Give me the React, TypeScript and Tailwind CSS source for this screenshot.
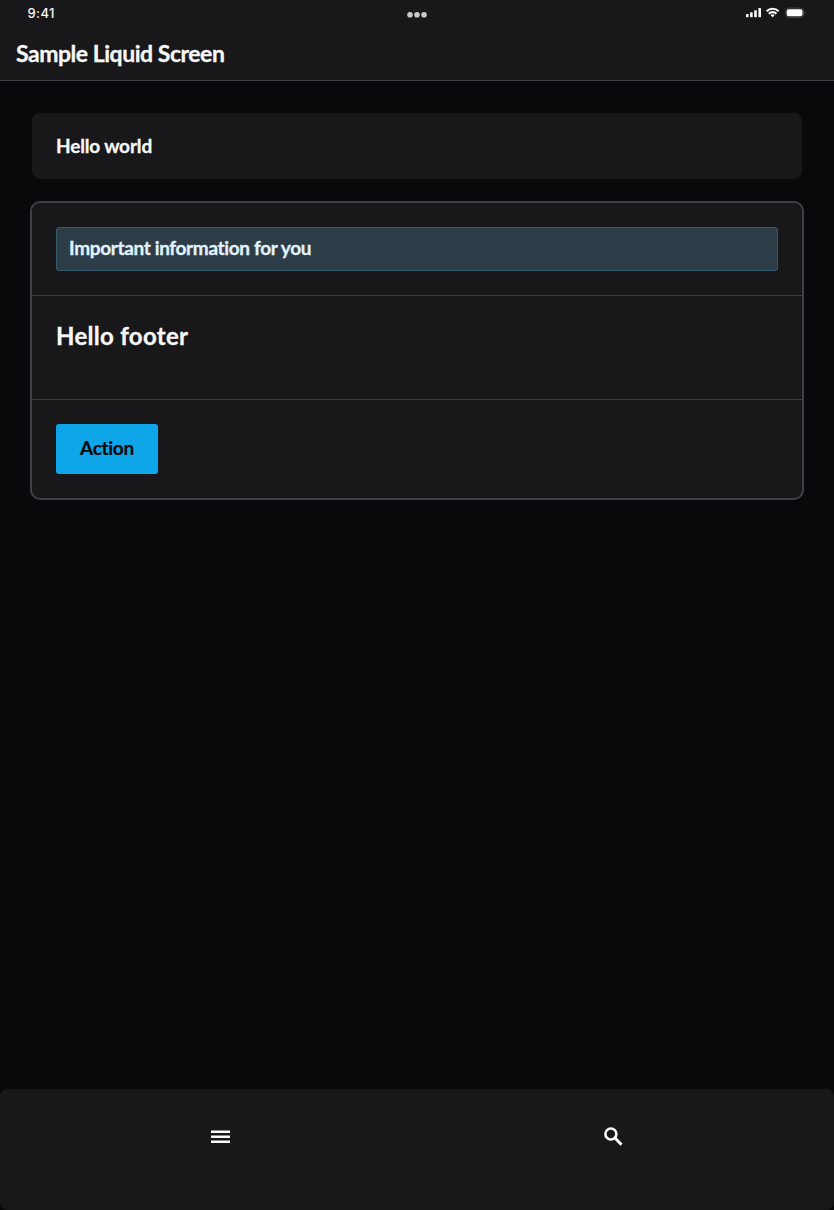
function StatusBar() {
  return (
    <div className="grid h-7 grid-cols-3 items-start">
      <span className="pt-[5px] pl-[27.5px] font-['Inter',sans-serif] text-[13px] leading-4 font-medium tracking-[0.4px]">9:41</span>
      <svg className="mt-[11px] justify-self-center" width="20" height="7" viewBox="0 0 20 7" fill="#c9c9ca">
        <circle cx="3" cy="3.8" r="2.8" />
        <circle cx="10" cy="3.8" r="2.8" />
        <circle cx="17" cy="3.8" r="2.8" />
      </svg>
      <svg className="mt-1.5 mr-[28px] justify-self-end" width="60" height="14" viewBox="0 0 60 14" fill="#fafafa">
        <rect x="0" y="8" width="2.6" height="3.2" rx=".6" />
        <rect x="4.1" y="6.3" width="2.6" height="4.9" rx=".6" />
        <rect x="8.2" y="4.2" width="2.6" height="7" rx=".6" />
        <rect x="12.4" y="2" width="2.6" height="9.2" rx=".6" />
        <g fill="none" stroke="#fafafa" strokeWidth="2.1">
          <path d="M20.6 5.3a8.4 8.4 0 0 1 12 0" />
          <path d="M22.8 7.7a5.3 5.3 0 0 1 7.6 0" />
        </g>
        <path d="M24.6 9.2a2.9 2.9 0 0 1 4 0l-2 2.1z" />
        <rect x="39.6" y="2.1" width="18" height="9.3" rx="3" fill="none" stroke="#48484b" strokeWidth="1" />
        <rect x="40.7" y="3.2" width="15.8" height="7.1" rx="2" fill="#fff" />
        <path d="M58.5 5.2c1.2.5 1.2 2.6 0 3.1z" fill="#48484b" />
      </svg>
    </div>
  );
}

export default function App() {
  return (
    <div className="flex h-[1210px] w-[834px] flex-col bg-[#09090b] font-['Lato',sans-serif] font-bold text-[#f7f7f7]">
      <header className="h-[81px] border-b border-[#3f3f46] bg-[#18181b]">
        <StatusBar />
        <h1 className="pt-[9px] pl-4 text-[23px] leading-8 tracking-[-0.47px] [-webkit-text-stroke:0.3px]">Sample Liquid Screen</h1>
      </header>
      <main className="flex-1 px-[30px] pt-8">
        <section className="mx-0.5 h-[66px] rounded-lg bg-[#18181b] px-6 pt-5">
          <p className="text-[19px] leading-[26px] tracking-[-0.15px] [-webkit-text-stroke:0.3px]">Hello world</p>
        </section>
        <section className="mt-[22px] h-[299px] rounded-[10px] border-2 border-[#3f3f46] bg-[#18181b]">
          <div className="h-[93px] border-b border-[#3f3f46] px-6 pt-6">
            <div className="h-11 rounded-[3px] border border-[#365a6d] bg-[#2d3d47] px-3 pt-[7px] text-[19px] leading-[26px] tracking-[-0.35px] text-[#e0f2fe] [-webkit-text-stroke:0.3px]">
              Important information for you
            </div>
          </div>
          <div className="h-[104px] border-b border-[#3f3f46] px-6 pt-6">
            <h2 className="text-2xl leading-8 tracking-[0.3px] [-webkit-text-stroke:0.3px]">Hello footer</h2>
          </div>
          <div className="px-6 pt-6">
            <button className="h-[50px] w-[102px] rounded-[3px] bg-[#0ea5e9] pb-0.5 text-[19px] leading-[26px] tracking-[-0.3px] text-[#09090b] [-webkit-text-stroke:0.2px]">Action</button>
          </div>
        </section>
      </main>
      <nav className="flex h-[121px] rounded-lg bg-[#18181b] px-6 pt-[36px]">
        <button aria-label="Menu" className="flex h-6 w-[393px] justify-center">
          <svg width="24" height="24" viewBox="0 0 24 24" fill="#fafafa">
            <path d="M2 5.4h19v2.6h-19zM2 10.4h19V13h-19zM2 15.4h19V18h-19z" />
          </svg>
        </button>
        <button aria-label="Search" className="flex h-6 w-[393px] justify-center">
          <svg width="24" height="24" viewBox="0 0 24 24" fill="none" stroke="#fafafa" strokeWidth="2.6">
            <circle cx="8.9" cy="9" r="5.5" />
            <path d="m12.8 12.8 6.7 7" strokeWidth="3" />
          </svg>
        </button>
      </nav>
    </div>
  );
}
